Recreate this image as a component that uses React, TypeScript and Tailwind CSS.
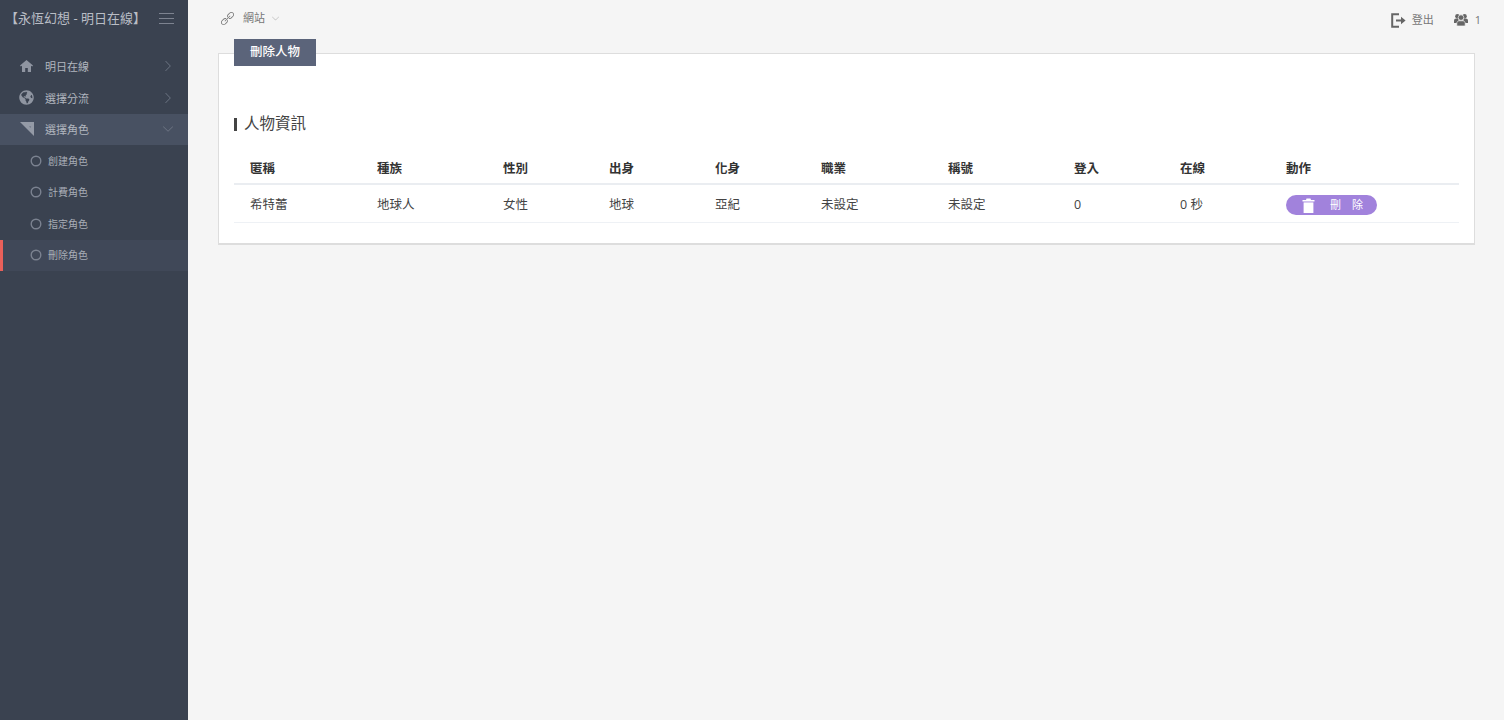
import { FaGlobeAmericas } from 'react-icons/fa';
import { SlArrowDown, SlArrowRight, SlLink } from 'react-icons/sl';

const subItems = ['創建角色', '計費角色', '指定角色', '刪除角色'];

const columns = [
  { label: '匿稱', value: '希特蕾', width: 'w-[127px]' },
  { label: '種族', value: '地球人', width: 'w-[126px]' },
  { label: '性別', value: '女性', width: 'w-[106px]' },
  { label: '出身', value: '地球', width: 'w-[106px]' },
  { label: '化身', value: '亞紀', width: 'w-[106px]' },
  { label: '職業', value: '未設定', width: 'w-[127px]' },
  { label: '稱號', value: '未設定', width: 'w-[126px]' },
  { label: '登入', value: '0', width: 'w-[106px]' },
  { label: '在線', value: '0 秒', width: 'w-[106px]' },
];

function HomeIcon() {
  return (
    <svg width="13" height="12" viewBox="0 0 13 12" className="text-[#8f95a1]">
      <path d="M6.5 0L0 5.6L.8 6.6L2 5.7V12H5.2V8H7.8V12H11V5.7L12.2 6.6L13 5.6Z" fill="currentColor" />
    </svg>
  );
}

function CornerIcon() {
  return (
    <svg width="14" height="14" viewBox="0 0 14 14" className="text-[#949aa6]">
      <path d="M0 0H14V14Z" fill="currentColor" />
      <path d="M9 4.2L11.2 4.2L10.4 6Z" fill="#6f7787" />
    </svg>
  );
}

function CircleIcon() {
  return (
    <svg width="12" height="12" viewBox="0 0 12 12" className="text-[#7b8290]">
      <circle cx="6" cy="6" r="4.8" fill="none" stroke="currentColor" strokeWidth="1.4" />
    </svg>
  );
}

function LogoutIcon() {
  return (
    <svg width="15" height="15" viewBox="0 0 15 15" className="text-[#666]">
      <path d="M8 1.2H1.2V13.8H8" fill="none" stroke="currentColor" strokeWidth="2" />
      <path d="M5 6.5H10V3.8L14.6 7.5L10 11.2V8.5H5Z" fill="currentColor" />
    </svg>
  );
}

// old-style "users" glyph: one figure in front of two others
function UsersIcon() {
  return (
    <svg width="14" height="14" viewBox="0 0 14 14" className="text-[#666]">
      <circle cx="3.4" cy="3.2" r="2.2" fill="currentColor" />
      <circle cx="10.6" cy="3.2" r="2.2" fill="currentColor" />
      <path d="M0 10V7.5C0 6.2 1 5.5 2.2 5.5H4.6V10Z" fill="currentColor" />
      <path d="M14 10V7.5C14 6.2 13 5.5 11.8 5.5H9.4V10Z" fill="currentColor" />
      <circle cx="7" cy="4.6" r="2.8" fill="currentColor" stroke="#f5f5f5" strokeWidth="0.7" />
      <path
        d="M2.8 13V10.4C2.8 8.8 4 7.8 5.4 7.8H8.6C10 7.8 11.2 8.8 11.2 10.4V13Z"
        fill="currentColor"
        stroke="#f5f5f5"
        strokeWidth="0.7"
      />
    </svg>
  );
}

function TrashIcon() {
  return (
    <svg width="13" height="15" viewBox="0 0 13 15" className="text-white">
      <path d="M4.5 0.5H8.5L9 2H12.5V3.4H.5V2H4Z" fill="currentColor" />
      <path d="M1.6 4.4H11.4V15H1.6Z" fill="currentColor" />
    </svg>
  );
}

function MenuRow({ icon, label, active, open }: { icon: React.ReactNode; label: string; active?: boolean; open?: boolean }) {
  return (
    <div className={`flex h-[31.5px] items-center pl-[19px] pr-[15px] ${active ? 'bg-[#485162]' : ''}`}>
      <span className="flex w-[15px] justify-center">{icon}</span>
      <span className="ml-[11px] flex-1 pt-[2px] text-[11px] text-[#b1b6bf]">{label}</span>
      {open ? (
        <SlArrowDown className="text-[10px] text-[#6f7785]" />
      ) : (
        <SlArrowRight className="text-[10px] text-[#6f7785]" />
      )}
    </div>
  );
}

export default function App() {
  return (
    <div className="flex min-h-[720px] bg-[#f5f5f5] font-['Open_Sans','Noto_Sans_CJK_TC',sans-serif]">
      <aside className="w-[188px] shrink-0 bg-[#3a4250]">
        <div className="flex h-[37px] items-center justify-between pl-[5px] pr-[14px]">
          <span className="text-[13px] text-[#b9bdc5]">【永恆幻想 - 明日在線】</span>
          <div className="flex w-[15px] flex-col gap-[4px]">
            <span className="h-px bg-[#7d8390]" />
            <span className="h-px bg-[#7d8390]" />
            <span className="h-px bg-[#7d8390]" />
          </div>
        </div>
        <nav className="mt-[13.5px]">
          <MenuRow icon={<HomeIcon />} label="明日在線" />
          <MenuRow icon={<FaGlobeAmericas className="text-[15px] text-[#8f95a1]" />} label="選擇分流" />
          <MenuRow icon={<CornerIcon />} label="選擇角色" active open />
          {subItems.map((item, i) => {
            const current = i === subItems.length - 1;
            return (
              <div
                key={item}
                className={`flex h-[31.5px] items-center border-l-[3px] pl-[27px] ${
                  current ? 'border-[#e9605a] bg-[#404858]' : 'border-transparent'
                }`}
              >
                <CircleIcon />
                <span className="ml-[6px] pt-[1px] text-[10px] text-[#a8adb6]">{item}</span>
              </div>
            );
          })}
        </nav>
      </aside>

      <main className="flex-1 pl-[30px] pr-[29px]">
        <header className="-mr-[6px] flex h-[39px] items-start justify-between pl-[3px] pt-[10px] text-[11px] text-[#777]">
          <div className="flex items-center">
            <SlLink className="text-[13px] text-[#777]" />
            <span className="ml-[9px]">網站</span>
            <SlArrowDown className="ml-[7px] text-[7px] text-[#aaa]" />
          </div>
          <div className="mt-[2px] flex items-center">
            <LogoutIcon />
            <span className="ml-[6px]">登出</span>
            <span className="ml-[20px]">
              <UsersIcon />
            </span>
            <span className="ml-[7px]">1</span>
          </div>
        </header>

        <section className="mt-[14px] h-[192px] border border-b-2 border-[#ddd] bg-white px-[15px]">
          <div className="-mt-[15px] flex h-[27px] w-[82px] items-center justify-center bg-[#5b647a] text-[12.5px] font-medium text-white">
            刪除人物
          </div>
          <div className="mt-[49px] flex h-[18px] items-center">
            <span className="h-[13px] w-[3px] bg-[#444]" />
            <h2 className="ml-[7px] text-[15.5px] text-[#444]">人物資訊</h2>
          </div>
          <table className="mt-[18px] w-[1225px] table-fixed border-collapse text-[12.5px]">
            <thead>
              <tr className="h-[33px] border-b-2 border-[#eaedf1]">
                {columns.map((c) => (
                  <th key={c.label} className={`${c.width} pl-[16px] pt-[4px] text-left font-bold text-[#333]`}>
                    {c.label}
                  </th>
                ))}
                <th className="pl-[16px] pt-[4px] text-left font-bold text-[#333]">動作</th>
              </tr>
            </thead>
            <tbody>
              <tr className="h-[38px] border-b border-[#eef1f5]">
                {columns.map((c) => (
                  <td key={c.label} className="pl-[16px] pt-[4px] text-[#444]">
                    {c.value}
                  </td>
                ))}
                <td className="pl-[16px] pt-[4px]">
                  <button className="flex h-[20px] w-[91px] items-center rounded-full bg-[#a182dc] pl-[16px] text-[11px] text-white">
                    <TrashIcon />
                    <span className="ml-[15px] tracking-[11px]">刪除</span>
                  </button>
                </td>
              </tr>
            </tbody>
          </table>
        </section>
      </main>
    </div>
  );
}
